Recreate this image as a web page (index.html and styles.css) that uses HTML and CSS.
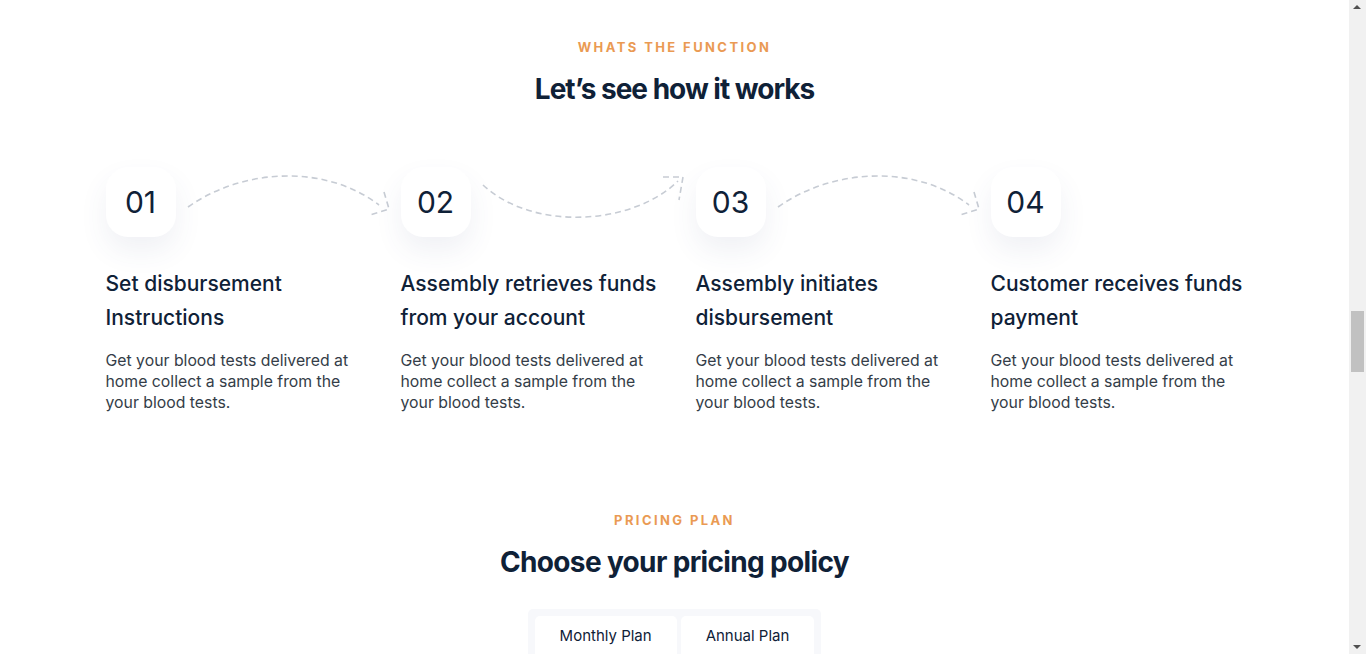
FILE: index.html
```html
<!DOCTYPE html>
<html lang="en">
<head>
<meta charset="utf-8">
<title>How it works</title>
<link rel="stylesheet" href="styles.css">
</head>
<body>
<div class="page">
<section class="works">
  <div class="section-head">
    <p class="eyebrow">WHATS THE FUNCTION</p>
    <h2 class="title">Let’s see how it works</h2>
  </div>
  <div class="steps">
    <div class="step">
      <div class="num">01</div>
      <svg class="arrow" width="220" height="56" viewBox="0 0 220 56" aria-hidden="true">
        <path d="M1 36 C 58 -4, 140 -6, 192 34" />
        <path d="M197 21 L 202 38 L 183 44" />
      </svg>
      <h3 class="step-title">Set disbursement Instructions</h3>
      <p class="step-text">Get your blood tests delivered at home collect a sample from the your blood tests.</p>
    </div>
    <div class="step">
      <div class="num">02</div>
      <svg class="arrow" width="220" height="56" viewBox="0 0 220 56" aria-hidden="true">
        <path d="M1 14 C 50 60, 150 55, 196 10" />
        <path d="M181 6 L 201 6 L 197 29" />
      </svg>
      <h3 class="step-title">Assembly retrieves funds from your account</h3>
      <p class="step-text">Get your blood tests delivered at home collect a sample from the your blood tests.</p>
    </div>
    <div class="step">
      <div class="num">03</div>
      <svg class="arrow" width="220" height="56" viewBox="0 0 220 56" aria-hidden="true">
        <path d="M1 36 C 58 -4, 140 -6, 192 34" />
        <path d="M197 21 L 202 38 L 183 44" />
      </svg>
      <h3 class="step-title">Assembly initiates disbursement</h3>
      <p class="step-text">Get your blood tests delivered at home collect a sample from the your blood tests.</p>
    </div>
    <div class="step">
      <div class="num">04</div>
      <h3 class="step-title">Customer receives funds payment</h3>
      <p class="step-text">Get your blood tests delivered at home collect a sample from the your blood tests.</p>
    </div>
  </div>
</section>

<section class="pricing">
  <div class="section-head">
    <p class="eyebrow">PRICING PLAN</p>
    <h2 class="title title-wide">Choose your pricing policy</h2>
  </div>
  <div class="toggle">
    <button class="tab">Monthly Plan</button>
    <button class="tab">Annual Plan</button>
  </div>
  <div class="plans"></div>
</section>
</div>
<div class="scrollbar" aria-hidden="true">
  <span class="sb-up"></span>
  <span class="sb-thumb"></span>
  <span class="sb-down"></span>
</div>
</body>
</html>
```

FILE: styles.css
```css
* { box-sizing: border-box; }
html, body { margin: 0; padding: 0; }
body {
  font-family: "Inter", "Open Sans", sans-serif;
  color: #0f2137;
  background: #fff;
}
.page { width: calc(100% - 17px); }
.works { padding-top: 38px; }
.section-head { text-align: center; }
.eyebrow {
  margin: 0;
  font-size: 13px;
  line-height: 18px;
  font-weight: 700;
  letter-spacing: 2.4px;
  color: #ea9a53;
}
.title {
  margin: 15px 0 0;
  font-size: 28px;
  line-height: 36px;
  font-weight: 700;
  letter-spacing: -1px;
  color: #0f2137;
}
.title-wide { letter-spacing: -0.65px; }
.steps {
  width: 1180px;
  margin: 60px auto 0;
  display: grid;
  grid-template-columns: repeat(4, 1fr);
}
.step {
  position: relative;
  padding: 0 12px 0 21px;
}
.num {
  width: 70px;
  height: 70px;
  border-radius: 22px;
  background: #fff;
  box-shadow: 0 14px 28px rgba(58, 80, 130, 0.08);
  display: flex;
  align-items: center;
  justify-content: center;
  font-size: 30px;
  font-weight: 400;
  color: #0f2137;
}
.arrow {
  position: absolute;
  left: 102px;
  top: 4px;
  overflow: visible;
  fill: none;
  stroke: #c7ccd4;
  stroke-width: 1.6;
  stroke-dasharray: 6 4;
}
.step-title {
  margin: 30px 0 0;
  font-size: 21px;
  line-height: 34px;
  font-weight: 500;
  color: #0f2137;
}
.step-text {
  margin: 15px 0 0;
  font-size: 15.8px;
  line-height: 21px;
  color: #343d48;
}
.pricing { padding-top: 98px; }
.pricing .title { margin-top: 15px; }
.toggle {
  width: max-content;
  margin: 29px auto 0;
  padding: 7px 7px 0;
  background: #f7f8fb;
  border-radius: 5px;
  display: flex;
  gap: 4px;
}
.tab {
  border: 0;
  background: #fff;
  border-radius: 5px;
  padding: 11px 25px 22px;
  line-height: 18px;
  font-family: inherit;
  font-size: 15px;
  color: #0f2137;
}
.plans { height: 900px; }

.scrollbar {
  position: fixed;
  top: 0;
  right: 0;
  width: 17px;
  height: 100vh;
  background: #f1f1f1;
}
.sb-thumb {
  position: absolute;
  left: 2px;
  top: 311px;
  width: 13px;
  height: 61px;
  background: #c1c1c1;
}
.sb-up, .sb-down {
  position: absolute;
  left: 4px;
  width: 0;
  height: 0;
  border-left: 4px solid transparent;
  border-right: 4px solid transparent;
}
.sb-up { top: 5px; border-bottom: 4px solid #505050; }
.sb-down { bottom: 5px; border-top: 4px solid #505050; }
```
